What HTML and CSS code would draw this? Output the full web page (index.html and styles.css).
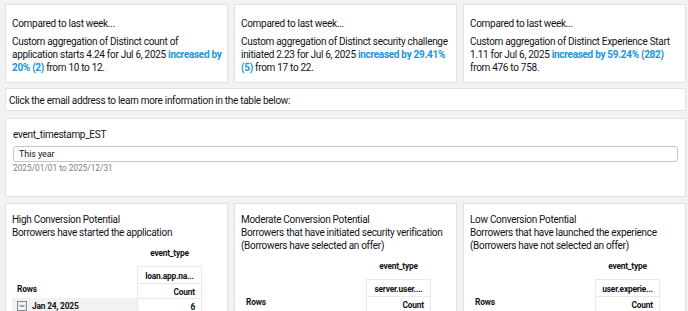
FILE: index.html
```html
<!DOCTYPE html>
<html lang="en">
<head>
<meta charset="utf-8">
<title>Dashboard</title>
<link rel="stylesheet" href="styles.css">
</head>
<body>
<div class="sheet">
  <section class="kpis">
    <div class="card kpi">
      <p class="kpi-head">Compared to last week...</p>
      <p class="kpi-text">Custom aggregation of Distinct count of application starts 4.24 for Jul 6, 2025 <span class="up">increased by 20% (2)</span> from 10 to 12.</p>
    </div>
    <div class="card kpi">
      <p class="kpi-head">Compared to last week...</p>
      <p class="kpi-text">Custom aggregation of Distinct security challenge initiated 2.23 for Jul 6, 2025 <span class="up">increased by 29.41% (5)</span> from 17 to 22.</p>
    </div>
    <div class="card kpi">
      <p class="kpi-head">Compared to last week...</p>
      <p class="kpi-text">Custom aggregation of Distinct Experience Start 1.11 for Jul 6, 2025 <span class="up">increased by 59.24% (282)</span> from 476 to 758.</p>
    </div>
  </section>

  <div class="card info">Click the email address to learn more information in the table below:</div>

  <div class="card filter">
    <div class="filter-label">event_timestamp_EST</div>
    <div class="filter-input">This year</div>
    <div class="filter-hint">2025/01/01 to 2025/12/31</div>
  </div>

  <section class="tables">
    <div class="card tcard">
      <div class="ttitle">High Conversion Potential<br>Borrowers have started the application</div>
      <div class="pivot">
        <div class="p-blank"></div><div class="p-field">event_type</div>
        <div class="p-blank"></div><div class="p-col">loan.app.na...</div>
        <div class="p-rows">Rows</div><div class="p-measure">Count</div>
        <div class="p-rowcell"><svg class="collapse" width="10" height="10" viewBox="0 0 10 10"><rect x="0.5" y="0.5" width="9" height="9" fill="none" stroke="#7d8998"/><path d="M2.5 5h5" stroke="#545b64" stroke-width="1"/></svg>Jan 24, 2025</div><div class="p-val">6</div>
      </div>
    </div>
    <div class="card tcard">
      <div class="ttitle">Moderate Conversion Potential<br>Borrowers that have initiated security verification<br>(Borrowers have selected an offer)</div>
      <div class="pivot">
        <div class="p-blank"></div><div class="p-field">event_type</div>
        <div class="p-blank"></div><div class="p-col">server.user....</div>
        <div class="p-rows">Rows</div><div class="p-measure">Count</div>
      </div>
    </div>
    <div class="card tcard">
      <div class="ttitle">Low Conversion Potential<br>Borrowers that have launched the experience<br>(Borrowers have not selected an offer)</div>
      <div class="pivot">
        <div class="p-blank"></div><div class="p-field">event_type</div>
        <div class="p-blank"></div><div class="p-col">user.experie...</div>
        <div class="p-rows">Rows</div><div class="p-measure">Count</div>
      </div>
    </div>
  </section>
</div>
</body>
</html>
```

FILE: styles.css
```css
* { box-sizing: border-box; }
html, body { margin: 0; padding: 0; }
body {
  background: #f2f2f2;
  font-family: "Roboto", "Liberation Sans", sans-serif;
  font-size: 10px;
  letter-spacing: -0.3px;
  color: #101318;
  overflow: hidden;
}
.sheet {
  padding: 4px 2px 0 5px;
  display: flex;
  flex-direction: column;
  gap: 5px;
}
.card {
  background: #fff;
  border: 1px solid #e1e1e1;
}
.kpis, .tables {
  display: grid;
  grid-template-columns: repeat(3, 1fr);
  gap: 6px;
}
.kpi {
  height: 79px;
  padding: 12px 2px 0 6px;
}
.kpi p { margin: 0; line-height: 13px; }
.kpi-head { margin-bottom: 5px !important; }
.up { color: #1a96db; font-weight: 700; }

.info {
  height: 23px;
  padding: 5px 3px;
  line-height: 13px;
}
.filter {
  height: 79px;
  margin-top: 2px;
  padding: 9px 7px 0 7px;
}
.filter-label { line-height: 13px; }
.filter-input {
  margin-top: 5px;
  height: 16px;
  border: 1px solid #c7c7c7;
  border-radius: 3px;
  padding: 0 5px;
  line-height: 14px;
  font-size: 9px;
  letter-spacing: -0.1px;
}
.filter-hint {
  margin-top: 0;
  color: #7a7f86;
  font-size: 8.3px;
  letter-spacing: 0;
  line-height: 12px;
}

.tables { margin-top: 1px; }
.tcard {
  height: 120px;
  padding: 9px 2px 0 6px;
}
.ttitle { line-height: 13px; }
.pivot {
  margin-top: 8px;
  margin-right: 23px;
  display: grid;
  grid-template-columns: 1fr 65px;
  font-size: 8.4px;
  letter-spacing: -0.2px;
  font-weight: 700;
}
.p-field { text-align: center; line-height: 12px; height: 14px; }
.p-col {
  margin-top: 5px;
  height: 17px;
  line-height: 18px;
  text-align: center;
  border: 1px solid #e9e9e9;
  border-bottom: none;
  padding: 0 4px;
}
.p-rows {
  padding-left: 5px;
  line-height: 13px;
  height: 15px;
}
.p-measure {
  text-align: right;
  padding-right: 6px;
  height: 15px;
  line-height: 16px;
  border: 1px solid #e9e9e9;
  border-bottom: none;
}
.p-rowcell {
  background: #f2f2f2;
  height: 16px;
  display: flex;
  align-items: center;
  gap: 5px;
  padding-left: 5px;
}
.p-val {
  text-align: right;
  padding-right: 6px;
  line-height: 16px;
  border: 1px solid #e9e9e9;
}
.collapse { flex: none; }
```
